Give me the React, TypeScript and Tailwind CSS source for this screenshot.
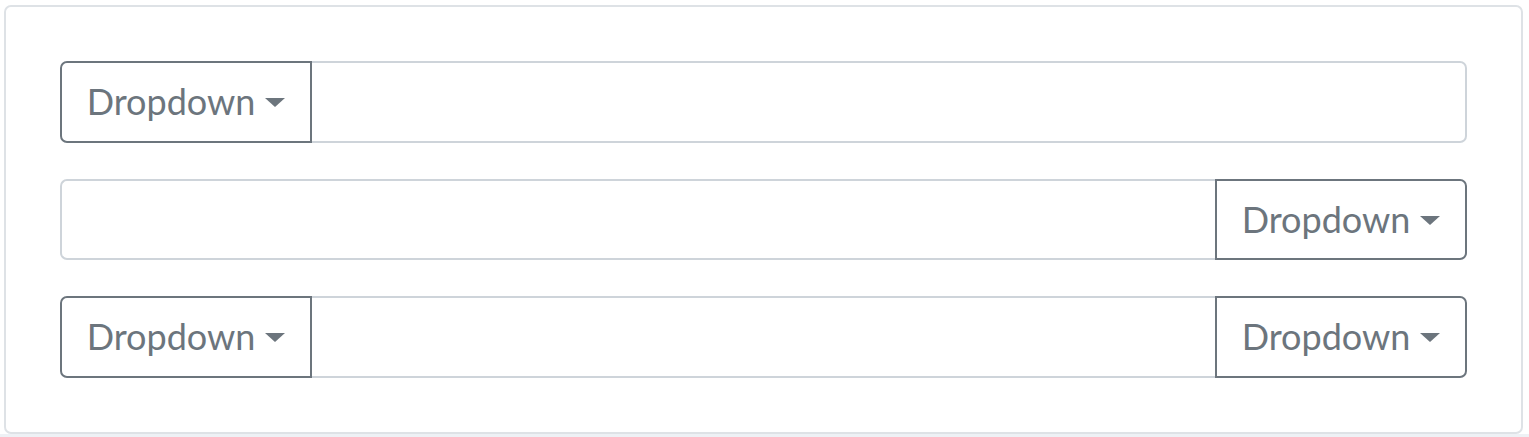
function Caret() {
    return <span className="inline-block w-0 h-0 border-t-[9px] border-t-[#6c757d] border-x-[10px] border-x-transparent ml-[10px] mt-[1px]" />;
}

function DropdownButton({ side }: { side: 'left' | 'right' }) {
    const rounded = side === 'left' ? 'rounded-l-[7px]' : 'rounded-r-[7px]';
    return (
        <button className={`flex items-center justify-center w-[252px] h-full shrink-0 border-2 border-[#6c757d] bg-white text-[#6c757d] text-[36px] leading-none font-['Lato',sans-serif] ${rounded}`}>
            <span className="pb-[2px]">Dropdown</span>
            <Caret />
        </button>
    );
}

function Row({ left, right }: { left?: boolean; right?: boolean }) {
    const inputRound = `${left ? '' : 'rounded-l-[7px] border-l-2'} ${right ? '' : 'rounded-r-[7px] border-r-2'}`;
    return (
        <div className="flex h-[82px]">
            {left && <DropdownButton side="left" />}
            <input type="text" className={`flex-1 min-w-0 h-full border-y-2 border-[#ced4da] bg-white outline-none ${inputRound}`} />
            {right && <DropdownButton side="right" />}
        </div>
    );
}

export default function App() {
    return (
        <div className="w-[1529px] h-[437px] bg-white flex flex-col">
            <div className="pt-[5px] pl-[4px] pr-[6px]">
                <div className="h-[429px] border-2 border-[#dee2e6] rounded-[7px] bg-white p-[54px] flex flex-col gap-[36px]">
                    <Row left />
                    <Row right />
                    <Row left right />
                </div>
            </div>
            <div className="flex-1 bg-[#eef1f5]" />
        </div>
    );
}
